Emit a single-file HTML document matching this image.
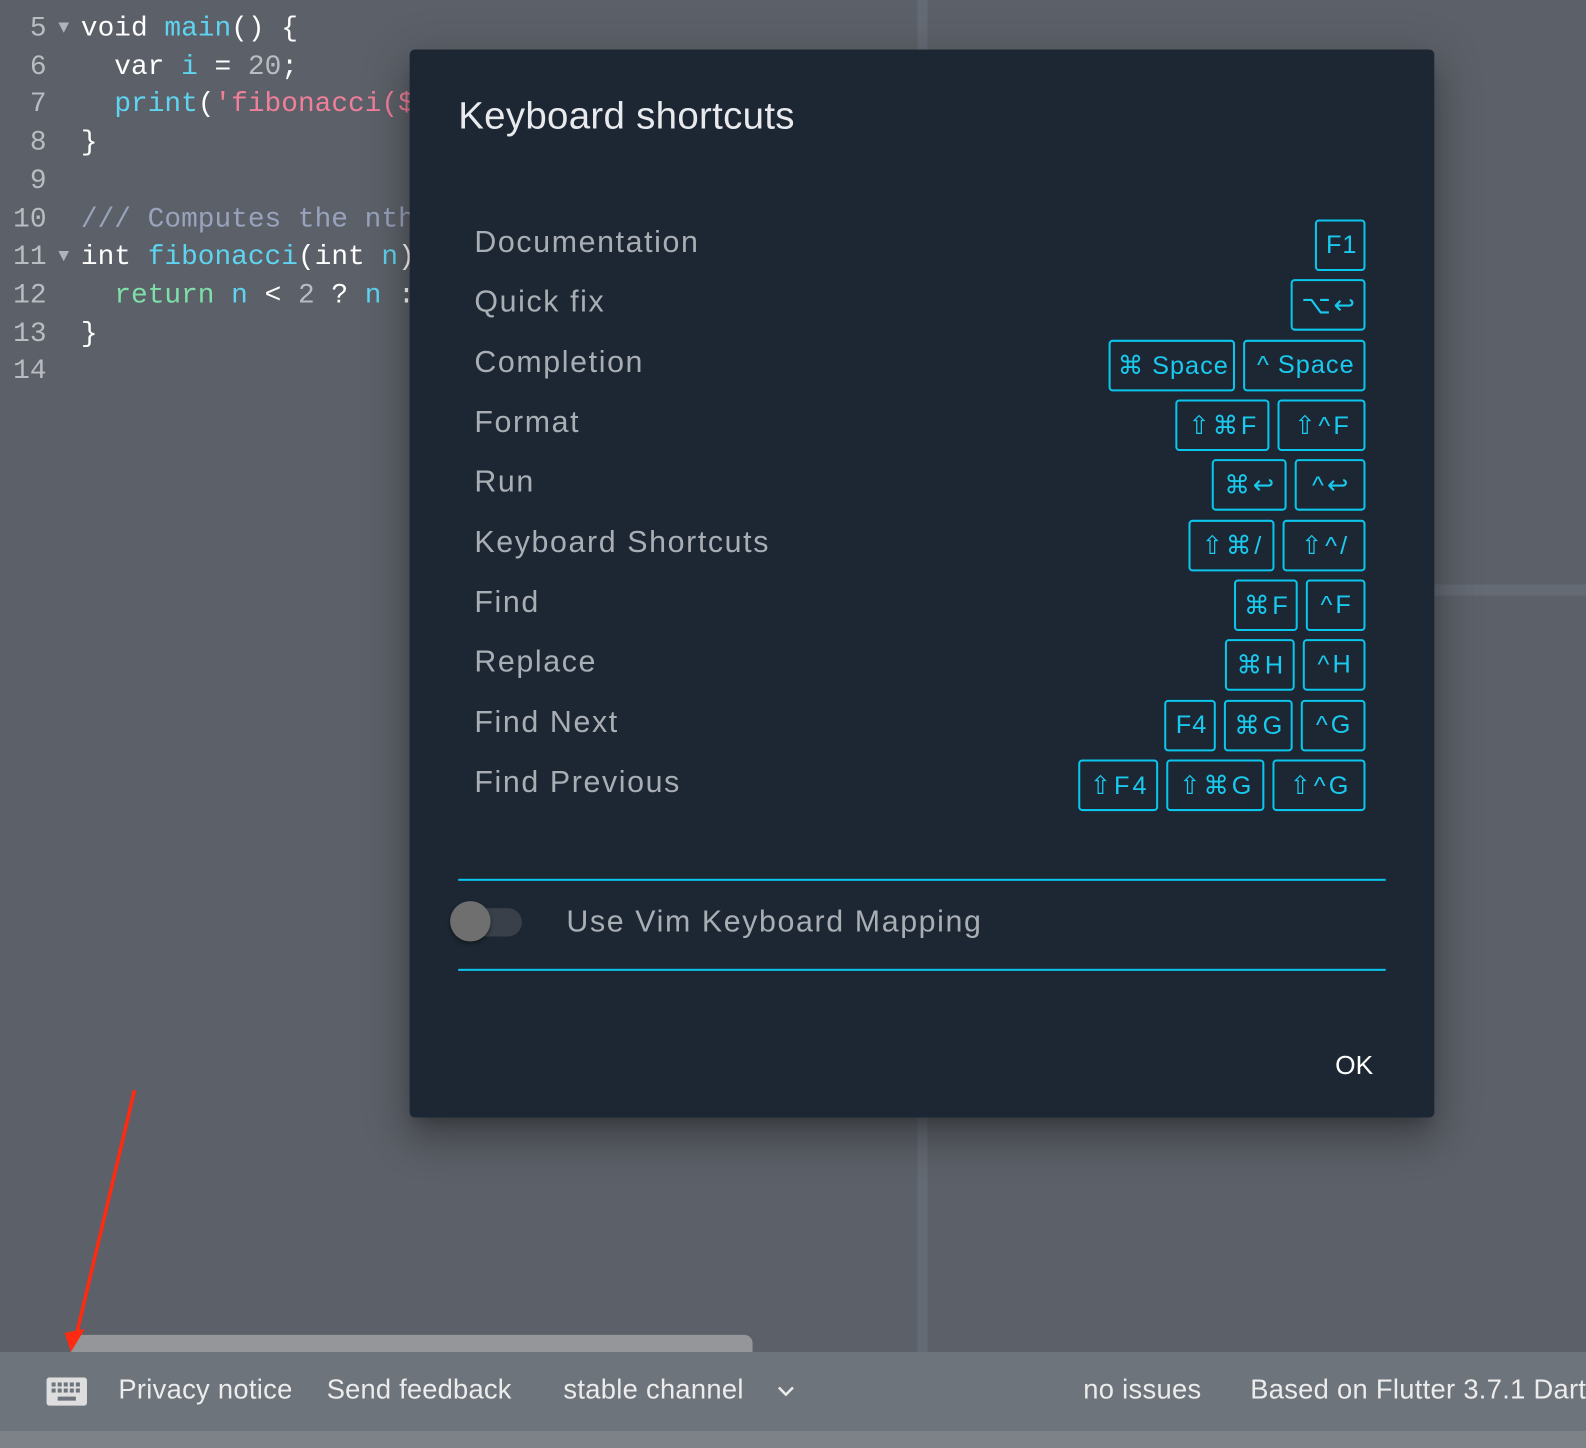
<!DOCTYPE html>
<html><head><meta charset="utf-8"><style>
*{margin:0;padding:0;box-sizing:border-box}
html,body{width:1586px;height:1432px;overflow:hidden;background:#5c6068}
#w{position:absolute;left:0;top:0;width:1568px;height:1416px;transform:scale(1.01148,1.0113);transform-origin:0 0;font-family:"Liberation Sans",sans-serif}
.code{position:absolute;left:0;top:10px;font-family:"Liberation Mono","DejaVu Sans Mono",monospace;font-size:27.5px;line-height:37.7px;color:#fff;white-space:pre}
.ln{display:inline-block;width:46px;text-align:right;color:#b9bcc0}
.tri{display:inline-block;width:34px;color:#b0b3b7;font-size:18px;vertical-align:3px;text-align:center}
.c{color:#5fd4f0}.s{color:#f07f9a}.n{color:#b9bcc0}.cm{color:#9aa3bd}.k{color:#7ee0a8}
.dlg{position:absolute;left:405px;top:49px;width:1013px;height:1056px;background:#1c2733;border-radius:5px;box-shadow:0 24px 38px 3px rgba(0,0,0,.18),0 9px 46px 8px rgba(0,0,0,.14),0 11px 15px -7px rgba(0,0,0,.25)}
.title{position:absolute;left:48px;top:45px;font-size:38px;color:#e8eaed;letter-spacing:0.3px}
.row{position:absolute;left:64px;width:881px;height:52px}
.lab{position:absolute;left:0;top:6px;font-size:30px;color:#a9aeb4;letter-spacing:1.6px}
.keys{position:absolute;right:0;top:0;display:flex;gap:8px}
.key{height:51px;border:2px solid #0bc6ec;border-radius:4px;color:#19c9ee;font-size:25px;display:flex;align-items:center;justify-content:center;white-space:nowrap;letter-spacing:3px;padding-left:3px}
.hr{position:absolute;left:48px;width:917px;height:2px;background:#0bc6ec}
.status{position:absolute;left:0;top:1337px;width:1568px;height:78px;background:#6e747b;color:#ececec;font-size:27px}
.status span{position:absolute;top:22px;white-space:nowrap}
</style></head><body><div id="w">
<div style="position:absolute;left:907px;top:0;width:10px;height:1337px;background:#656b74"></div>
<div style="position:absolute;left:1418px;top:578px;width:168px;height:11px;background:#656b74"></div>
<div class="code"><span class="ln">5</span><span class="tri">▼</span>void <span class="c">main</span>() {
<span class="ln">6</span><span class="tri"> </span>  var <span class="c">i</span> = <span class="n">20</span>;
<span class="ln">7</span><span class="tri"> </span>  <span class="c">print</span>(<span class="s">'fibonacci($</span>
<span class="ln">8</span><span class="tri"> </span>}
<span class="ln">9</span>
<span class="ln">10</span><span class="tri"> </span><span class="cm">/// Computes the nth</span>
<span class="ln">11</span><span class="tri">▼</span>int <span class="c">fibonacci</span>(int <span class="c">n</span>)
<span class="ln">12</span><span class="tri"> </span>  <span class="k">return</span> <span class="c">n</span> &lt; <span class="n">2</span> ? <span class="c">n</span> :
<span class="ln">13</span><span class="tri"> </span>}
<span class="ln">14</span></div>
<div style="position:absolute;left:70px;top:1320px;width:674px;height:17px;background:#94969a;border-radius:0 8px 0 0"></div>
<div class="dlg">
<div class="title">Keyboard shortcuts</div>
<div class="row" style="top:168px"><div class="lab">Documentation</div><div class="keys"><div class="key" style="width:50px;letter-spacing:1px">F1</div></div></div>
<div class="row" style="top:227px"><div class="lab">Quick fix</div><div class="keys"><div class="key" style="width:74px">⌥↩</div></div></div>
<div class="row" style="top:287px"><div class="lab">Completion</div><div class="keys"><div class="key" style="width:125px;letter-spacing:1px">⌘ Space</div><div class="key" style="width:121px;letter-spacing:1px">^ Space</div></div></div>
<div class="row" style="top:346px"><div class="lab">Format</div><div class="keys"><div class="key" style="width:93px">⇧⌘F</div><div class="key" style="width:87px">⇧^F</div></div></div>
<div class="row" style="top:405px"><div class="lab">Run</div><div class="keys"><div class="key" style="width:74px">⌘↩</div><div class="key" style="width:70px">^↩</div></div></div>
<div class="row" style="top:465px"><div class="lab">Keyboard Shortcuts</div><div class="keys"><div class="key" style="width:85px">⇧⌘/</div><div class="key" style="width:82px">⇧^/</div></div></div>
<div class="row" style="top:524px"><div class="lab">Find</div><div class="keys"><div class="key" style="width:63px">⌘F</div><div class="key" style="width:59px">^F</div></div></div>
<div class="row" style="top:583px"><div class="lab">Replace</div><div class="keys"><div class="key" style="width:69px">⌘H</div><div class="key" style="width:62px">^H</div></div></div>
<div class="row" style="top:643px"><div class="lab">Find Next</div><div class="keys"><div class="key" style="width:51px;letter-spacing:1px">F4</div><div class="key" style="width:68px">⌘G</div><div class="key" style="width:64px">^G</div></div></div>
<div class="row" style="top:702px"><div class="lab">Find Previous</div><div class="keys"><div class="key" style="width:79px">⇧F4</div><div class="key" style="width:97px">⇧⌘G</div><div class="key" style="width:92px">⇧^G</div></div></div>
<div class="hr" style="top:820px"></div>
<div class="hr" style="top:909px"></div>
<div style="position:absolute;left:42px;top:849px;width:69px;height:28px;border-radius:14px;background:#394049"></div>
<div style="position:absolute;left:40px;top:842px;width:40px;height:40px;border-radius:50%;background:#6f6f6f;box-shadow:0 2px 4px rgba(0,0,0,.4)"></div>
<div style="position:absolute;left:155px;top:846px;font-size:30px;color:#a9aeb4;letter-spacing:1.6px">Use Vim Keyboard Mapping</div>
<div style="position:absolute;left:915px;top:989px;font-size:26px;color:#fff">OK</div>
</div>
<div class="status">
<svg style="position:absolute;left:46px;top:25px" width="40" height="28" viewBox="0 0 40 28"><rect width="40" height="28" rx="3" fill="#dedede"/><g fill="#6e747b"><rect x="5" y="5" width="4" height="4"/><rect x="11" y="5" width="4" height="4"/><rect x="17" y="5" width="4" height="4"/><rect x="23" y="5" width="4" height="4"/><rect x="29" y="5" width="4" height="4"/><rect x="5" y="11" width="4" height="4"/><rect x="11" y="11" width="4" height="4"/><rect x="17" y="11" width="4" height="4"/><rect x="23" y="11" width="4" height="4"/><rect x="29" y="11" width="4" height="4"/><rect x="11" y="19" width="18" height="4"/></g></svg>
<span style="left:117px;letter-spacing:0.3px">Privacy notice</span>
<span style="left:323px;letter-spacing:0.2px">Send feedback</span>
<span style="left:557px;letter-spacing:0.3px">stable channel</span>
<svg style="position:absolute;left:768px;top:33px" width="18" height="12" viewBox="0 0 18 12"><path d="M2 2 L9 9 L16 2" fill="none" stroke="#ececec" stroke-width="2.5"/></svg>
<span style="left:1071px;letter-spacing:0.3px">no issues</span>
<span style="left:1236px;letter-spacing:0.3px">Based on Flutter 3.7.1 Dart</span>
</div>
<div style="position:absolute;left:0;top:1415px;width:1568px;height:17px;background:#7d8288"></div>
<svg style="position:absolute;left:0;top:0" width="1568" height="1416"><line x1="133" y1="1078" x2="76" y2="1318" stroke="#ff2a10" stroke-width="3.5"/><polygon points="64,1318 84,1314 70,1337" fill="#ff2a10"/></svg>
</div></body></html>
